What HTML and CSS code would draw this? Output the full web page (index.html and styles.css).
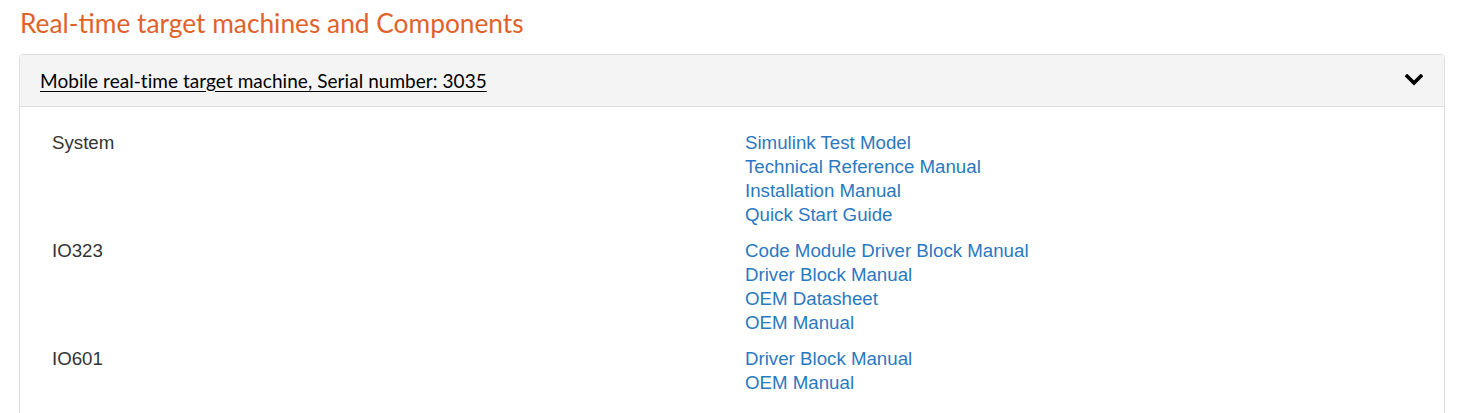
FILE: index.html
```html
<!DOCTYPE html>
<html lang="en">
<head>
<meta charset="utf-8">
<title>Real-time target machines and Components</title>
<link rel="stylesheet" href="styles.css">
</head>
<body>
<div class="page">
  <h2 class="title">Real-time target machines and Components</h2>
  <div class="panel">
    <div class="panel-heading">
      <a class="panel-title" href="#">Mobile real-time target machine, Serial number: 3035</a>
      <svg class="chevron" width="18" height="12" viewBox="0 0 18 12" aria-hidden="true">
        <polyline points="2.2,2.2 9,9 15.8,2.2" fill="none" stroke="#000" stroke-width="3.6" stroke-linecap="square"/>
      </svg>
    </div>
    <div class="panel-body">
      <div class="comp">
        <div class="label">System</div>
        <ul class="links">
          <li><a href="#">Simulink Test Model</a></li>
          <li><a href="#">Technical Reference Manual</a></li>
          <li><a href="#">Installation Manual</a></li>
          <li><a href="#">Quick Start Guide</a></li>
        </ul>
      </div>
      <div class="comp">
        <div class="label">IO323</div>
        <ul class="links">
          <li><a href="#">Code Module Driver Block Manual</a></li>
          <li><a href="#">Driver Block Manual</a></li>
          <li><a href="#">OEM Datasheet</a></li>
          <li><a href="#">OEM Manual</a></li>
        </ul>
      </div>
      <div class="comp">
        <div class="label">IO601</div>
        <ul class="links">
          <li><a href="#">Driver Block Manual</a></li>
          <li><a href="#">OEM Manual</a></li>
        </ul>
      </div>
    </div>
  </div>
</div>
</body>
</html>
```
FILE: styles.css
```css
* { box-sizing: border-box; }
html, body { margin: 0; padding: 0; background: #fff; }
body {
  font-family: "Liberation Sans", Arial, sans-serif;
  font-size: 18.7px;
  line-height: 24px;
  color: #333;
}
.page { padding: 0 20px 0 19px; }
.title {
  margin: 0;
  padding-top: 6px;
  height: 54px;
  font-family: Lato, "Open Sans", sans-serif;
  font-weight: 400;
  font-size: 26.3px;
  line-height: 34px;
  color: #e0622b;
  padding-left: 1px;
}
.panel {
  border: 1px solid #ddd;
  border-radius: 4px;
  height: 380px;
}
.panel-heading {
  display: flex;
  align-items: center;
  justify-content: space-between;
  background: #f4f4f4;
  border-bottom: 1px solid #ddd;
  border-radius: 3px 3px 0 0;
  height: 52px;
  padding: 0 21px 0 20px;
}
.panel-title {
  font-family: Lato, "Open Sans", sans-serif;
  font-size: 19px;
  letter-spacing: 0.05px;
  color: #000;
  text-decoration: underline;
  text-underline-offset: 3px;
}
.chevron { display: block; margin-top: -2px; }
.panel-body {
  padding: 24px 20px 0 32px;
}
.comp {
  display: grid;
  grid-template-columns: 693px 1fr;
  margin-bottom: 12px;
}
.label { color: #333; }
.links { list-style: none; margin: 0; padding: 0; }
.links a { color: #2a79c0; text-decoration: none; }
```
